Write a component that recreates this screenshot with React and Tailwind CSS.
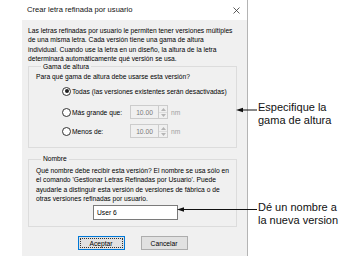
import React from 'react';

const Radio = ({ checked }) => (
  <span className="w-[9px] h-[9px] rounded-full border border-[#333] bg-white flex items-center justify-center shrink-0">
    {checked && <span className="w-[4px] h-[4px] rounded-full bg-[#222]" />}
  </span>
);

const Spin = ({ value }) => (
  <div className="flex items-center">
    <div className="w-[29px] h-[14px] border border-[#cccccc] bg-[#f0f0f0] text-[#7a7a7a] flex items-center justify-center">{value}</div>
    <div className="w-[9px] h-[14px] border border-l-0 border-[#cccccc] flex flex-col">
      <div className="flex-1 flex items-center justify-center border-b border-[#dddddd]">
        <svg width="5" height="3" viewBox="0 0 5 3"><path d="M0 3 L2.5 0 L5 3 Z" fill="#b5b5b5" /></svg>
      </div>
      <div className="flex-1 flex items-center justify-center">
        <svg width="5" height="3" viewBox="0 0 5 3"><path d="M0 0 L2.5 3 L5 0 Z" fill="#b5b5b5" /></svg>
      </div>
    </div>
    <span className="ml-[3px] text-[#a0a0a0]">nm</span>
  </div>
);

export default function App() {
  return (
    <div className="relative w-[352px] h-[272px] bg-white overflow-hidden flex" style={{ fontFamily: '"Liberation Sans", Arial, sans-serif' }}>
      {/* dialog */}
      <div className="ml-[22px] w-[226px] h-[256px] flex flex-col border-r border-[#b4b4b4] text-[6.7px] leading-[9.4px] text-black">
        <div className="h-[20px] bg-white flex items-center justify-between pl-[5px] pr-[7px]">
          <span className="text-[7.6px] text-[#111]">Crear letra refinada por usuario</span>
          <svg width="7" height="7" viewBox="0 0 7 7"><path d="M0.5 0.5 L6.5 6.5 M6.5 0.5 L0.5 6.5" stroke="#333" strokeWidth="0.8" /></svg>
        </div>
        <div className="flex-1 bg-[#f0f0f0] pl-[6px] pr-[10px] pt-[6px] flex flex-col">
          <p className="whitespace-nowrap">
            Las letras refinadas por usuario le permiten tener versiones múltiples<br />
            de una misma letra. Cada versión tiene una gama de altura<br />
            individual. Cuando use la letra en un diseño, la altura de la letra<br />
            determinará automáticamente qué versión se usa.
          </p>

          {/* Gama de altura */}
          <fieldset className="mt-[-2px] border border-[#dcdcdc] pl-[7px] pr-[5px] pb-[9px]">
            <legend className="ml-[5px] px-[2px]">Gama de altura</legend>
            <p className="mt-[1px]">Para qué gama de altura debe usarse esta versión?</p>
            <div className="ml-[26px] mt-[3px] h-[14px] flex items-center gap-[1px] whitespace-nowrap overflow-hidden">
              <Radio checked />
              <span>Todas (las versiones existentes serán desactivadas)</span>
            </div>
            <div className="ml-[26px] mt-[7px] h-[14px] flex items-center gap-[1px] whitespace-nowrap">
              <Radio />
              <span className="w-[57px]">Más grande que:</span>
              <Spin value="10.00" />
            </div>
            <div className="ml-[26px] mt-[5px] h-[14px] flex items-center gap-[1px] whitespace-nowrap">
              <Radio />
              <span className="w-[57px]">Menos de:</span>
              <Spin value="10.00" />
            </div>
          </fieldset>

          {/* Nombre */}
          <fieldset className="mt-[6px] border border-[#dcdcdc] pl-[7px] pr-[5px] pb-[6px]">
            <legend className="ml-[5px] px-[2px]">Nombre</legend>
            <p className="mt-[2px] whitespace-nowrap">
              Qué nombre debe recibir esta versión? El nombre se usa sólo en<br />
              el comando 'Gestionar Letras Refinadas por Usuario'. Puede<br />
              ayudarle a distinguir esta versión de versiones de fábrica o de<br />
              otras versiones refinadas por usuario.
            </p>
            <div className="mt-[2px] ml-[57px] w-[85px] h-[15px] border border-[#7a7a7a] bg-white flex items-center pl-[3px]">User 6</div>
          </fieldset>

          <div className="mt-[9px] flex justify-center gap-[16px]">
            <button className="w-[47px] h-[14px] border border-[#0078d7] bg-[#e1e1e1] p-[1px]">
              <span className="w-full h-full border border-dotted border-[#333] flex items-center justify-center">Aceptar</span>
            </button>
            <button className="w-[47px] h-[14px] border border-[#adadad] bg-[#e1e1e1] flex items-center justify-center">Cancelar</button>
          </div>
        </div>
      </div>

      {/* annotations */}
      <div className="pl-[10px] flex flex-col text-[11px] leading-[13px] text-[#111]">
        <p className="mt-[101px]">Especifique la<br />gama de altura</p>
        <p className="mt-[74px]">Dé un nombre a<br />la nueva version</p>
      </div>

      <svg className="absolute left-0 top-0" width="352" height="272" viewBox="0 0 352 272">
        <path d="M242 110 L257 110" stroke="#111" strokeWidth="1" />
        <path d="M236 110 L243 107.8 L243 112.2 Z" fill="#111" />
        <path d="M183 209.5 L257 209.5" stroke="#111" strokeWidth="1" />
        <path d="M177 209.5 L184 207.3 L184 211.7 Z" fill="#111" />
      </svg>
    </div>
  );
}
